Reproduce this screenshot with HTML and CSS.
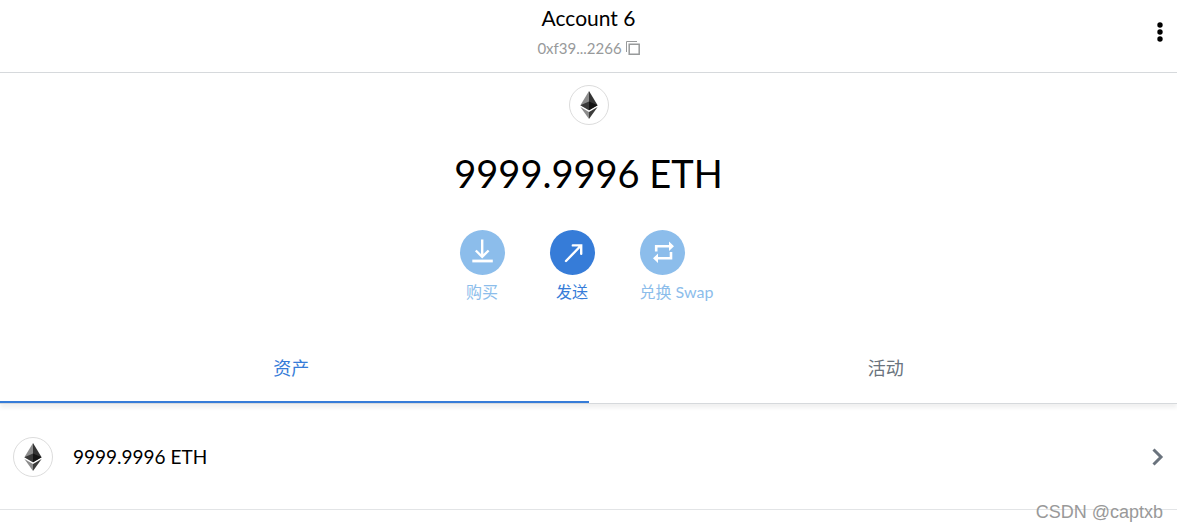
FILE: index.html
```
<!DOCTYPE html>
<html lang="zh-CN">
    <head>
        <meta charset="UTF-8" />
        <meta name="viewport" content="width=device-width, initial-scale=1.0" />
        <title>Account 6</title>
        <link rel="stylesheet" href="styles.css">
    </head>
    <body>
        <svg class="sprite" aria-hidden="true">
            <symbol id="eth" viewBox="0 0 18 28">
                <path fill="#343434" d="M9 0l8.6 14.2L9 19.2z" />
                <path fill="#8c8c8c" d="M9 0L.4 14.2 9 19.2z" />
                <path fill="#141414" d="M9 10.4l8.6 3.8L9 19.2z" />
                <path fill="#393939" d="M9 10.4L.4 14.2 9 19.2z" />
                <path fill="#3c3c3b" d="M9 20.9l8.6-5L9 28z" />
                <path fill="#8c8c8c" d="M9 20.9l-8.6-5L9 28z" />
            </symbol>
        </svg>
        <header class="menu-bar">
            <div class="account">
                <h1 class="account-name">Account 6</h1>
                <button class="address" type="button">
                    0xf39...2266
                    <svg width="14" height="14" viewBox="0 0 14 14" fill="none" stroke="#989a9b">
                        <path d="M.5 11V.5H11" />
                        <path stroke-width="1.5" d="M3.2 3.2h10v10h-10z" />
                    </svg>
                </button>
            </div>
            <button class="options" type="button" aria-label="选项">
                <svg width="6" height="20" viewBox="0 0 6 20">
                    <circle cx="3" cy="3" r="2.7" />
                    <circle cx="3" cy="10" r="2.7" />
                    <circle cx="3" cy="17" r="2.7" />
                </svg>
            </button>
        </header>
        <main>
            <section class="overview">
                <span class="token"><svg width="18" height="28"><use href="#eth" /></svg></span>
                <p class="balance">9999.9996 ETH</p>
                <div class="actions">
                    <button class="action" type="button" disabled>
                        <span class="circle">
                            <svg width="45" height="45" viewBox="0 0 45 45" fill="none" stroke="#fff" stroke-width="2.4">
                                <path d="M22.2 9.5v17M15.8 20.5l6.4 6.3 6.4-6.3" />
                                <path stroke-width="2.8" d="M12.3 31h20.5" />
                            </svg>
                        </span>
                        <span>购买</span>
                    </button>
                    <button class="action" type="button">
                        <span class="circle">
                            <svg width="45" height="45" viewBox="0 0 45 45" fill="none" stroke="#fff" stroke-width="2.4" stroke-linecap="round">
                                <path d="M16 31l15-15.5M22.8 15.4h8.4v8.3" />
                            </svg>
                        </span>
                        <span>发送</span>
                    </button>
                    <button class="action wide" type="button" disabled>
                        <span class="circle">
                            <svg width="45" height="45" viewBox="0 0 45 45" fill="none" stroke="#fff" stroke-width="2.6">
                                <path d="M16.2 21.500v-5.200h14M31 22v6.300h-14" />
                                <path fill="#fff" stroke="none" d="M29 11.6l5 4.700-5 4.700zM18 23.600l-5 4.700 5 4.700z" />
                            </svg>
                        </span>
                        <span>兑换 Swap</span>
                    </button>
                </div>
            </section>
            <nav class="tabs">
                <button class="tab active" type="button">资产</button>
                <button class="tab" type="button">活动</button>
            </nav>
            <button class="asset" type="button">
                <span class="token"><svg width="18" height="28"><use href="#eth" /></svg></span>
                <span class="amount">9999.9996 ETH</span>
                <svg width="12" height="18" viewBox="0 0 12 18" fill="none" stroke="#6a737d" stroke-width="3">
                    <path d="M1.5 1.5L9 9l-7.5 7.5" />
                </svg>
            </button>
        </main>
        <span class="watermark">CSDN @captxb</span>
    </body>
</html>
```
FILE: styles.css
```
* {
    margin: 0;
    padding: 0;
    box-sizing: border-box;
}

body {
    min-height: 100vh;
    background: #fff;
    color: #000;
    font-family: Lato, "Noto Sans CJK SC", sans-serif;
    font-size: 16px;
}

button {
    border: 0;
    background: none;
    color: inherit;
    font: inherit;
    cursor: pointer;
}

svg {
    display: block;
}

.sprite {
    display: none;
}

.menu-bar {
    display: grid;
    grid-template-columns: 1fr auto 1fr;
    padding: 6px 14px 14px;
    border-bottom: 1px solid #d6d9dc;
}

.account {
    grid-column: 2;
    display: flex;
    flex-direction: column;
    align-items: center;
    gap: 8px;
}

.account-name {
    font-size: 21px;
    font-weight: 400;
    line-height: 24px;
}

.address {
    display: flex;
    align-items: center;
    gap: 4px;
    color: #989a9b;
    font-size: 15px;
    line-height: 20px;
}

.options {
    justify-self: end;
    align-self: center;
}

.overview {
    display: flex;
    flex-direction: column;
    align-items: center;
    padding-top: 12px;
}

.token {
    display: grid;
    place-items: center;
    width: 40px;
    height: 40px;
    border: 1px solid #dcdcdc;
    border-radius: 50%;
}

.balance {
    margin: 22px 0 31px;
    font-size: 38px;
    line-height: 52px;
}

.actions {
    display: flex;
    gap: 45px;
}

.action {
    display: flex;
    flex-direction: column;
    align-items: center;
    gap: 5px;
    color: #367cd8;
    line-height: 24px;

    &:disabled {
        color: #8cbdeb;
        cursor: default;
    }

    &.wide {
        align-items: flex-start;
        min-width: 78px;
    }
}

.circle {
    width: 45px;
    height: 45px;
    border-radius: 50%;
    background: #367cd8;

    .action:disabled & {
        background: #8cbdeb;
    }
}

.tabs {
    display: flex;
    margin-top: 29px;
    border-bottom: 1px solid #d6d9dc;
    box-shadow: 0 4px 4px rgba(0, 0, 0, 0.06);
}

.tab {
    flex: 1;
    padding: 22px 8px 20px 14px;
    border-bottom: 2px solid transparent;
    color: #6a737d;
    font-size: 18px;
    line-height: 26px;

    &.active {
        padding-right: 14px;
        padding-left: 8px;
        border-color: #367cd8;
        color: #367cd8;
    }
}

.asset {
    display: flex;
    align-items: center;
    width: 100%;
    padding: 33px 13px 32px;
    border-bottom: 1px solid #e2e4e6;
}

.amount {
    flex: 1;
    padding-left: 20px;
    font-size: 19px;
    line-height: 24px;
    text-align: left;
}

.watermark {
    position: absolute;
    right: 14px;
    bottom: 8px;
    color: #999;
    font-family: "Liberation Sans", sans-serif;
    font-size: 18px;
    line-height: 24px;
}
```
